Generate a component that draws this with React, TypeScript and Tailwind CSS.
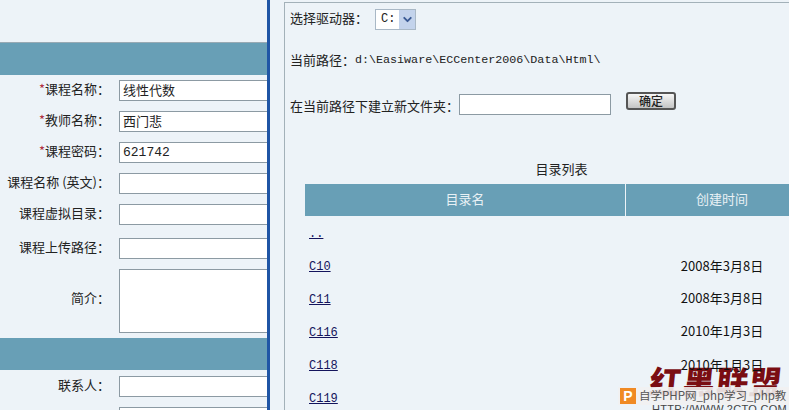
import { ChevronDown } from 'lucide-react'

function Field({ label, required, value, last }: { label: string; required?: boolean; value?: string; last?: boolean }) {
  const lift = value && /\d/.test(value) ? '' : 'pb-[3px]'
  return (
    <div className={`flex items-center h-[21px] ${last ? 'mb-[13px]' : 'mb-[10px]'}`}>
      <div className="w-[110px] shrink-0 pb-[3px] text-right text-[13px] leading-[18px] text-[#222] whitespace-nowrap">
        {required && <span className="text-[#b03040]">*</span>}
        {label}：
      </div>
      <input
        readOnly
        defaultValue={value}
        className={`ml-[9px] w-[148px] shrink-0 h-[21px] bg-white border border-[#8c9aa3] border-r-0 px-[3px] text-[13px] text-[#222] outline-none font-['Liberation_Mono','Noto_Sans_CJK_SC',monospace] ${lift}`}
      />
    </div>
  )
}

function Band() {
  return <div className="h-[32px] bg-[#689fb6]" />
}

const dirs = [
  { name: '..', date: '', h: 'h-[33px]' },
  { name: 'C10', date: '2008年3月8日', h: 'h-[33px]' },
  { name: 'C11', date: '2008年3月8日', h: 'h-[32px]' },
  { name: 'C116', date: '2010年1月3日', h: 'h-[34px]' },
  { name: 'C118', date: '2010年1月3日', h: 'h-[33px]' },
  { name: 'C119', date: '', h: 'h-[33px]' },
]

export default function App() {
  return (
    <div className="relative flex w-[789px] h-[410px] overflow-hidden bg-[#edf3f8] font-['Noto_Sans_CJK_SC',sans-serif]">
      {/* course form */}
      <div className="w-[267px] h-[410px] overflow-hidden shrink-0 pt-[42px]">
        <div className="border-t border-[#98aab4]">
          <Band />
        </div>
        <div className="pt-[5px]">
          <Field required label="课程名称" value="线性代数" />
          <Field required label="教师名称" value="西门悲" />
          <Field required label="课程密码" value="621742" />
          <Field label="课程名称 (英文)" />
          <Field label="课程虚拟目录" last />
          <Field label="课程上传路径" />
          <div className="flex items-center h-[64px] mb-[5px]">
            <div className="w-[110px] shrink-0 pb-[6px] text-right text-[13px] text-[#222]">简介：</div>
            <textarea readOnly className="ml-[9px] w-[148px] shrink-0 h-[64px] resize-none bg-white border border-[#8c9aa3] border-r-0 outline-none" />
          </div>
        </div>
        <Band />
        <div className="pt-[6px]">
          <Field label="联系人" />
          <Field label="电话" />
        </div>
      </div>

      {/* directory picker */}
      <div className="flex-1 min-w-0 border-l-[3px] border-[#1f55a5] pl-[14px] pt-[2px]">
        <div className="h-full border-l border-t border-[#a3b1b9] pl-[5px] text-[13px] text-[#222] overflow-hidden">
          <div className="flex items-center pt-[5px] h-[27px]">
            <span className="w-[85px] pb-[2px]">选择驱动器：</span>
            <div className="flex items-center w-[41px] h-[21px] bg-white border border-[#a9b8c6]">
              <span className="flex-1 pl-[5px] text-[12px] font-['Liberation_Mono',monospace]">C:</span>
              <span className="flex items-center justify-center w-[16px] h-full bg-[#c3d3ec]">
                <ChevronDown size={13} strokeWidth={3.5} className="text-[#3a5a94]" />
              </span>
            </div>
          </div>
          <div className="flex items-center mt-[20px] h-[22px] whitespace-nowrap">
            <span className="pb-[3px]">当前路径：</span>
            <span className="text-[11.7px] font-['Liberation_Mono',monospace]">d:\Easiware\ECCenter2006\Data\Html\</span>
          </div>
          <div className="flex items-start mt-[22px] h-[23px]">
            <span className="w-[169px] h-[23px] leading-[23px] whitespace-nowrap">在当前路径下建立新文件夹：</span>
            <input readOnly className="w-[152px] h-[21px] bg-white border border-[#8c9aa3] outline-none" />
            <button className="ml-[15px] -mt-[2px] w-[50px] h-[18px] rounded-[3px] border-2 border-[#555] bg-gradient-to-b from-[#f6f6f6] to-[#c4c4c4] text-[12px] leading-[14px] font-medium text-[#222]">
              确定
            </button>
          </div>
          <div className="ml-[15px] w-[513px] mt-[38px]">
            <div className="h-[29px] text-center leading-[28px]">目录列表</div>
            <div className="flex h-[32px] bg-[#689fb6] text-[#e8f1f5] leading-[30px] text-center">
              <div className="w-[320px] border-r border-[#edf3f8] box-content">目录名</div>
              <div className="flex-1">创建时间</div>
            </div>
            {dirs.map((d) => (
              <div key={d.name} className={`flex items-center ${d.h}`}>
                <a href="#" className="w-[321px] pl-[4px]">
                  <span className="underline text-[#14145c] text-[12px] font-['Liberation_Mono',monospace]">{d.name}</span>
                </a>
                <div className="relative z-10 flex-1 text-center text-[13px] text-[#111]">{d.date}</div>
              </div>
            ))}
          </div>
        </div>
      </div>

      {/* site watermark */}
      <div className="absolute left-[650px] top-[360px] w-[132px] flex justify-between text-[32px] leading-[40px] font-black text-[#7a0d12] -skew-x-6 whitespace-nowrap">
        <span>红</span><span>黑</span><span>联</span><span>盟</span>
      </div>
      <div className="absolute left-[652px] top-[403px] text-[11px] leading-[13px] tracking-[0.3px] text-[#444] font-['Liberation_Sans',sans-serif] whitespace-nowrap">HTTP://WWW.2CTO.COM</div>
      <div className="absolute left-[618px] top-[387px] w-[171px] h-[18px] flex items-center overflow-hidden bg-[#f1f1f1]/90">
        <span className="flex items-center justify-center shrink-0 w-[16px] h-[16px] ml-[2px] bg-[#f08a24] text-white text-[14px] font-bold leading-none font-['Liberation_Sans',sans-serif]">P</span>
        <span className="ml-[3px] pb-[2px] text-[11.5px] leading-[16px] text-[#555] whitespace-nowrap">自学PHP网_php学习_php教</span>
      </div>
    </div>
  )
}
